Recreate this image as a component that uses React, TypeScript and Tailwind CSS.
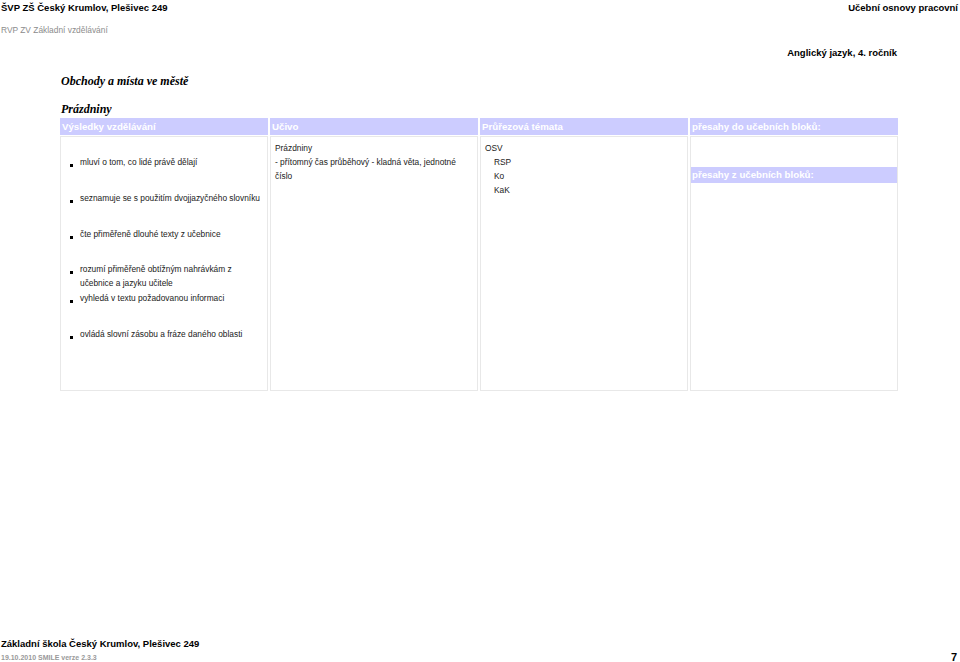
import React from "react";

const Bullet = ({ children, mt }: { children: React.ReactNode; mt: string }) => (
  <div className={`flex ${mt}`}>
    <div className="w-[19px] shrink-0 relative">
      <span className="absolute left-[9px] top-[9px] w-[3px] h-[3px] bg-black"></span>
    </div>
    <div className="leading-[14px]">{children}</div>
  </div>
);

export default function App() {
  const sans = { fontFamily: '"Liberation Sans", Arial, sans-serif' };
  const serif = { fontFamily: '"Liberation Serif", "Times New Roman", serif' };
  return (
    <div className="w-[960px] h-[662px] bg-white relative overflow-hidden text-black" style={sans}>
      <div className="flex justify-between px-[1px] pt-[1px] text-[9.5px] font-bold leading-[13px]">
        <span>ŠVP ZŠ Český Krumlov, Plešivec 249</span>
        <span className="pr-[1px]">Učební osnovy pracovní</span>
      </div>
      <div className="px-[1px] mt-[10px] text-[8.4px] leading-[12px] text-[#8c8c8c]">RVP ZV Základní vzdělávání</div>
      <div className="flex justify-end pr-[63px] mt-[10px] text-[9.5px] font-bold leading-[14px]">
        Anglický jazyk, 4. ročník
      </div>
      <div className="pl-[61px] mt-[12px] text-[12px] font-bold italic leading-[18px]" style={serif}>
        Obchody a místa ve městě
      </div>
      <div className="pl-[61px] mt-[10px] text-[12px] font-bold italic leading-[18px]" style={serif}>
        Prázdniny
      </div>
      <div className="ml-[60px] w-[838px] flex gap-[2px]">
        {/* column 1 */}
        <div className="w-[208px] flex flex-col">
          <div className="h-[17px] bg-[#ccccff] text-white font-bold text-[9.7px] leading-[17px] pl-[2px]">Výsledky vzdělávání</div>
          <div className="h-[255px] border border-[#e8e8e8] mt-[1px] text-[8.35px] text-[#222]">
            <Bullet mt="mt-[18px]">mluví o tom, co lidé právě dělají</Bullet>
            <Bullet mt="mt-[22px]">seznamuje se s použitím dvojjazyčného slovníku</Bullet>
            <Bullet mt="mt-[22px]">čte přiměřeně dlouhé texty z učebnice</Bullet>
            <Bullet mt="mt-[21px]">rozumí přiměřeně obtížným nahrávkám z<br />učebnice a jazyku učitele</Bullet>
            <Bullet mt="mt-[1px]">vyhledá v textu požadovanou informaci</Bullet>
            <Bullet mt="mt-[22px]">ovládá slovní zásobu a fráze daného oblasti</Bullet>
          </div>
        </div>
        {/* column 2 */}
        <div className="w-[208px] flex flex-col">
          <div className="h-[17px] bg-[#ccccff] text-white font-bold text-[9.7px] leading-[17px] pl-[2px]">Učivo</div>
          <div className="h-[255px] border border-[#e8e8e8] mt-[1px] text-[8.35px] text-[#222] pl-[4px] pt-[4px] leading-[14px]">
            <div>Prázdniny</div>
            <div>- přítomný čas průběhový - kladná věta, jednotné<br />číslo</div>
          </div>
        </div>
        {/* column 3 */}
        <div className="w-[208px] flex flex-col">
          <div className="h-[17px] bg-[#ccccff] text-white font-bold text-[9.7px] leading-[17px] pl-[2px]">Průřezová témata</div>
          <div className="h-[255px] border border-[#e8e8e8] mt-[1px] text-[8.35px] text-[#222] pl-[4px] pt-[4px] leading-[14px]">
            <div>OSV</div>
            <div className="pl-[9px]">RSP</div>
            <div className="pl-[9px]">Ko</div>
            <div className="pl-[9px]">KaK</div>
          </div>
        </div>
        {/* column 4 */}
        <div className="w-[208px] flex flex-col">
          <div className="h-[17px] bg-[#ccccff] text-white font-bold text-[9.7px] leading-[17px] pl-[2px]">přesahy do učebních bloků:</div>
          <div className="h-[255px] border border-[#e8e8e8] mt-[1px]">
            <div className="mt-[30px] h-[16px] bg-[#ccccff] text-white font-bold text-[9.7px] leading-[16px] pl-[1px]">přesahy z učebních bloků:</div>
          </div>
        </div>
      </div>
      <div className="absolute left-[1px] top-[637px] text-[9.5px] font-bold leading-[13px]">Základní škola Český Krumlov, Plešivec 249</div>
      <div className="absolute left-[1px] top-[653px] text-[7px] font-bold leading-[10px] text-[#999]">19.10.2010 SMILE verze 2.3.3</div>
      <div className="absolute right-[3px] top-[651px] text-[11px] font-bold leading-[13px]">7</div>
    </div>
  );
}
